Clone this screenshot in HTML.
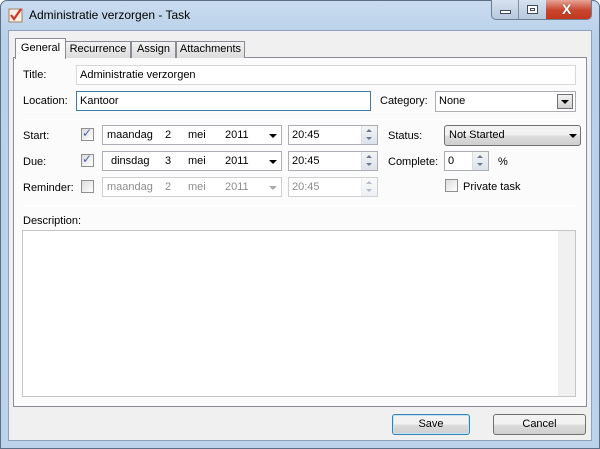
<!DOCTYPE html>
<html><head><style>
*{box-sizing:border-box;margin:0;padding:0}
body{width:600px;height:449px;overflow:hidden;background:#fff;font-family:"Liberation Sans",sans-serif;font-size:11px;color:#000;position:relative}
.a{position:absolute}
.frame{left:0;top:0;width:600px;height:449px;background:linear-gradient(#c9dbee,#b8d0ea 40px,#bcd3ec);border:1px solid #5c6f86;border-radius:7px 7px 0 0}
.client{left:8px;top:30px;width:584px;height:411px;background:#f0f0f0;border:1px solid #8ea3bb}
.panel{left:13px;top:57px;width:574px;height:350px;background:#fbfbfb;border:1px solid #898c95}
.tab{top:41px;height:17px;border:1px solid #898c95;border-bottom:none;background:linear-gradient(#f2f2f2,#dcdcdc);text-align:center;line-height:15px}
.inp{background:#fff;border:1px solid #abadb3;height:20px;line-height:18px;padding-left:3px}
.lbl{line-height:14px}
.cb{width:13px;height:13px;border:1px solid #8f8f8f;background:linear-gradient(135deg,#dcdcdc,#fff)}
.sep{height:1px;background:#a0a0a0;border-bottom:1px solid #fff;left:22px;width:554px}
.spin{width:16px;height:18px;top:0;right:0;border-left:1px solid #ddd;background:linear-gradient(#f4f4f4,#dde3ea)}
.spin:before{content:"";position:absolute;left:4px;top:3px;border-left:3px solid transparent;border-right:3px solid transparent;border-bottom:3px solid #6b7a90}
.spin:after{content:"";position:absolute;left:4px;top:11px;border-left:3px solid transparent;border-right:3px solid transparent;border-top:3px solid #6b7a90}
.btn{height:21px;border:1px solid #707070;border-radius:3px;background:linear-gradient(#f2f2f2 50%,#dddddd 50%,#cfcfcf);text-align:center;line-height:19px}
.g{color:#8d8d8d}
.arr{width:0;height:0;border-left:4px solid transparent;border-right:4px solid transparent;border-top:4px solid #000}
</style></head><body>
<div class="a frame"></div>
<svg class="a" style="left:8px;top:7px" width="16" height="16"><rect x="1" y="2" width="13" height="13" fill="#f6efe3" stroke="#a08060"/><path d="M3 8 L6 12 L13 2" stroke="#d2322a" stroke-width="2.2" fill="none"/></svg>
<div class="a" style="left:29px;top:8px;font-size:12px;color:#000">Administratie verzorgen - Task</div>
<div class="a" style="left:491px;top:0;width:101px;height:20px;border:1px solid #6c7d92;border-top:none;border-radius:0 0 5px 5px;overflow:hidden;background:linear-gradient(#d6e2ef,#b7c8dc)">
 <div class="a" style="left:26px;top:0;width:1px;height:20px;background:#7f90a6"></div>
 <div class="a" style="left:54px;top:0;width:46px;height:20px;background:linear-gradient(#e8a597,#c9472f 50%,#c0351c)"></div>
 <div class="a" style="left:8px;top:10px;width:11px;height:4px;background:#fff;border:1px solid #3c4b5e"></div>
 <div class="a" style="left:35px;top:5px;width:11px;height:9px;border:1px solid #3c4b5e;background:#fff"><div style="margin:2px;height:3px;border:1px solid #3c4b5e"></div></div>
 <div class="a" style="left:70px;top:1px;color:#fff;font-weight:bold;font-size:14px;text-shadow:0 0 1px #333">X</div>
</div>
<div class="a client"></div>
<div class="a panel"></div>
<div class="a tab" style="left:65px;width:66px">Recurrence</div>
<div class="a tab" style="left:131px;width:45px">Assign</div>
<div class="a tab" style="left:176px;width:69px">Attachments</div>
<div class="a tab" style="left:15px;top:38px;height:21px;width:51px;background:#fbfbfb;line-height:18px">General</div>

<div class="a lbl" style="left:23px;top:68px">Title:</div>
<div class="a inp" style="left:76px;top:65px;width:500px;border-color:#d8d8d8">Administratie verzorgen</div>
<div class="a lbl" style="left:23px;top:94px">Location:</div>
<div class="a inp" style="left:76px;top:91px;width:295px;border-color:#3d7bad">Kantoor</div>
<div class="a lbl" style="left:380px;top:94px">Category:</div>
<div class="a inp" style="left:435px;top:91px;width:141px;height:21px;line-height:19px">None</div>
<div class="a" style="left:557px;top:94px;width:16px;height:15px;border:1px solid #707070;background:linear-gradient(#f2f2f2,#d0d0d0)"><div class="arr" style="margin:5px 0 0 3px"></div></div>

<div class="a sep" style="top:119px"></div>

<div class="a lbl" style="left:23px;top:129px">Start:</div>
<div class="a cb" style="left:81px;top:128px"></div><div class="a" style="left:82px;top:126px;color:#4b63a8;font-size:12px">✓</div>
<div class="a inp" style="left:102px;top:125px;width:180px"><span class="a" style="left:4px">maandag</span><span class="a" style="left:62px">2</span><span class="a" style="left:85px">mei</span><span class="a" style="left:122px">2011</span><div class="a arr" style="left:166px;top:8px"></div></div>
<div class="a inp" style="left:288px;top:125px;width:90px">20:45<div class="a spin"></div></div>
<div class="a lbl" style="left:388px;top:129px">Status:</div>
<div class="a btn" style="left:444px;top:125px;width:137px;text-align:left;padding-left:4px">Not Started<div class="a arr" style="left:124px;top:8px"></div></div>

<div class="a lbl" style="left:23px;top:155px">Due:</div>
<div class="a cb" style="left:81px;top:154px"></div><div class="a" style="left:82px;top:152px;color:#4b63a8;font-size:12px">✓</div>
<div class="a inp" style="left:102px;top:151px;width:180px"><span class="a" style="left:8px">dinsdag</span><span class="a" style="left:62px">3</span><span class="a" style="left:85px">mei</span><span class="a" style="left:122px">2011</span><div class="a arr" style="left:166px;top:8px"></div></div>
<div class="a inp" style="left:288px;top:151px;width:90px">20:45<div class="a spin"></div></div>
<div class="a lbl" style="left:388px;top:155px">Complete:</div>
<div class="a inp" style="left:444px;top:151px;width:45px">0<div class="a spin"></div></div>
<div class="a lbl" style="left:498px;top:155px">%</div>

<div class="a lbl" style="left:23px;top:181px">Reminder:</div>
<div class="a cb" style="left:81px;top:180px"></div>
<div class="a inp g" style="left:102px;top:177px;width:180px;border-color:#d0d0d0"><span class="a" style="left:4px">maandag</span><span class="a" style="left:62px">2</span><span class="a" style="left:85px">mei</span><span class="a" style="left:122px">2011</span><div class="a arr" style="left:166px;top:8px;border-top-color:#aaa"></div></div>
<div class="a inp g" style="left:288px;top:177px;width:90px;border-color:#d0d0d0">20:45<div class="a spin" style="opacity:.5"></div></div>
<div class="a cb" style="left:445px;top:179px"></div>
<div class="a lbl" style="left:463px;top:180px">Private task</div>

<div class="a sep" style="top:205px"></div>
<div class="a lbl" style="left:23px;top:214px">Description:</div>
<div class="a inp" style="left:22px;top:230px;width:554px;height:167px;border-color:#c5c5c5"><div class="a" style="right:0;top:0;width:17px;height:165px;background:#f0f0f0"></div></div>

<div class="a btn" style="left:392px;top:414px;width:78px;border-color:#3c7fb1;box-shadow:inset 0 0 0 1px #bde6fb">Save</div>
<div class="a btn" style="left:493px;top:414px;width:93px">Cancel</div>
</body></html>
